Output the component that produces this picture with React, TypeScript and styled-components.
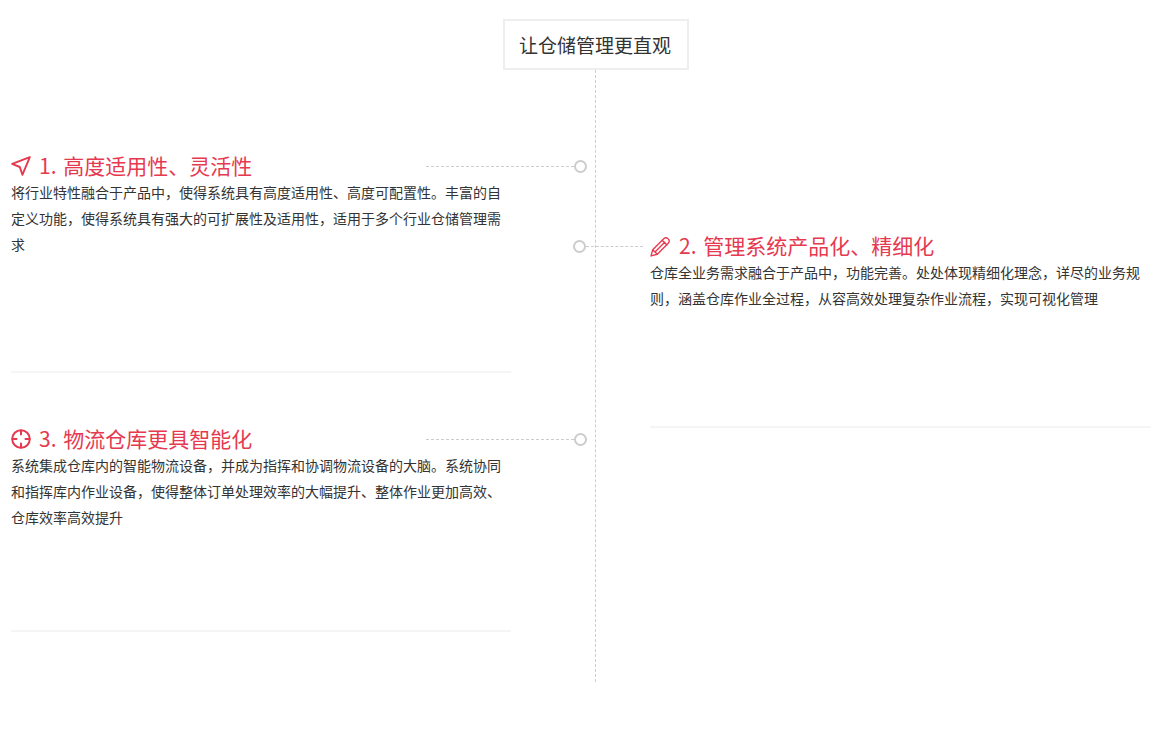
import React, { FC, ReactNode } from 'react';
import styled, { createGlobalStyle } from 'styled-components';

const GlobalStyle = createGlobalStyle`
    html, body {
        margin: 0;
        padding: 0;
        background: #fff;
    }
    body {
        font-family: 'Noto Sans CJK SC', 'Liberation Sans', sans-serif;
    }
`;

const Page = styled.div`
    width: 1156px;
    height: 751px;
    padding-top: 19px;
    box-sizing: border-box;
    overflow: hidden;
`;

const Heading = styled.h2`
    box-sizing: border-box;
    width: 186px;
    height: 51px;
    margin: 0 0 0 503px;
    padding-right: 2px;
    border: 2px solid #eee;
    font-size: 19px;
    font-weight: 400;
    line-height: 47px;
    text-align: center;
    color: #333;
`;

const Timeline = styled.div`
    display: grid;
    grid-template-columns: 500px 501px;
    column-gap: 139px;
    position: relative;
    width: 1140px;
    height: 613px;
    margin-left: 11px;
`;

const Spine = styled.span`
    position: absolute;
    left: 584px;
    top: 0;
    bottom: 1px;
    border-left: 1px dashed #ccc;
`;

const Column = styled.div<{ $top: number }>`
    padding-top: ${(p) => p.$top}px;
`;

const Item = styled.article<{ $height: number }>`
    position: relative;
    box-sizing: border-box;
    height: ${(p) => p.$height}px;
    margin-bottom: 53px;
    border-bottom: 2px solid #f5f5f5;
`;

const Title = styled.h3`
    display: flex;
    align-items: center;
    gap: 8px;
    height: 26px;
    margin: 0;
    font-size: 21px;
    font-weight: 400;
    line-height: 26px;
    word-spacing: 2px;
    color: #e63950;
`;

const TitleText = styled.span`
    margin-top: -2px;
`;

const Body = styled.p`
    margin: 0;
    font-size: 14px;
    line-height: 26px;
    color: #333;
`;

const Connector = styled.span<{ $side: 'left' | 'right' }>`
    position: absolute;
    top: 13px;
    border-top: 1px dashed #ccc;
    ${(p) => (p.$side === 'left' ? 'left: 415px; width: 148px;' : 'left: -64px; width: 57px;')}
`;

const Dot = styled.span<{ $side: 'left' | 'right' }>`
    position: absolute;
    top: 7px;
    box-sizing: border-box;
    width: 13px;
    height: 13px;
    border: 2px solid #ccc;
    border-radius: 50%;
    background: #fff;
    ${(p) => (p.$side === 'left' ? 'left: 563px;' : 'left: -77px;')}
`;

const IconSvg = styled.svg<{ $size?: number; $weight?: number }>`
    flex: none;
    width: ${(p) => p.$size ?? 20}px;
    height: ${(p) => p.$size ?? 20}px;
    fill: none;
    stroke: #e63950;
    stroke-width: ${(p) => p.$weight ?? 1.7};
    stroke-linejoin: round;
    stroke-linecap: round;
`;

const ArrowIcon: FC = () => (
    <IconSvg viewBox="0 0 20 20" $weight={1.9}>
        <path d="M18.8 1.2 1.2 7.8l7.6 3.2 2.6 7.8z" />
    </IconSvg>
);

const PencilIcon: FC = () => (
    <IconSvg viewBox="0 0 20 20" $size={21} $weight={1.3}>
        <path d="M1 19l1.6-6L12.8 2.8c1.4-1.4 3-1.5 4.2-.3l.4.4c1.2 1.2 1.1 2.9-.3 4.3L7 17.4zM2.6 13 7 17.4M11.6 4l4.5 4.5M4.8 15.2 14 6" />
    </IconSvg>
);

const TargetIcon: FC = () => (
    <IconSvg viewBox="0 0 20 20" $weight={2}>
        <circle cx="10" cy="10" r="8.8" />
        <path d="M10 1.5v4M10 14.5v4M1.5 10h4M14.5 10h4" />
    </IconSvg>
);

type EntryProps = {
    side: 'left' | 'right';
    height: number;
    icon: ReactNode;
    title: string;
    children: ReactNode;
};

const Entry: FC<EntryProps> = ({ side, height, icon, title, children }) => (
    <Item $height={height}>
        <Connector $side={side} />
        <Dot $side={side} />
        <Title>
            {icon}
            <TitleText>{title}</TitleText>
        </Title>
        <Body>{children}</Body>
    </Item>
);

const App: FC = () => {
    return (
        <Page>
            <GlobalStyle />
            <Heading>让仓储管理更直观</Heading>
            <Timeline>
                <Spine />
                <Column $top={83}>
                    <Entry side="left" height={220} icon={<ArrowIcon />} title="1. 高度适用性、灵活性">
                        将行业特性融合于产品中，使得系统具有高度适用性、高度可配置性。丰富的自定义功能，使得系统具有强大的可扩展性及适用性，适用于多个行业仓储管理需求
                    </Entry>
                    <Entry side="left" height={206} icon={<TargetIcon />} title="3. 物流仓库更具智能化">
                        系统集成仓库内的智能物流设备，并成为指挥和协调物流设备的大脑。系统协同和指挥库内作业设备，使得整体订单处理效率的大幅提升、整体作业更加高效、仓库效率高效提升
                    </Entry>
                </Column>
                <Column $top={163}>
                    <Entry side="right" height={195} icon={<PencilIcon />} title="2. 管理系统产品化、精细化">
                        仓库全业务需求融合于产品中，功能完善。处处体现精细化理念，详尽的业务规则，涵盖仓库作业全过程，从容高效处理复杂作业流程，实现可视化管理
                    </Entry>
                </Column>
            </Timeline>
        </Page>
    );
};

export default App;
